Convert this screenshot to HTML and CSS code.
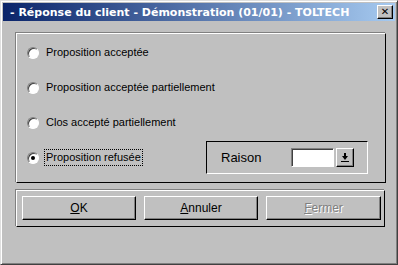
FILE: index.html
```html
<html lang="fr">
    <head>
        <meta charset="utf-8" />
        <title>Réponse du client</title>
        <link rel="stylesheet" href="styles.css">
    </head>
    <body>
        <div class="window">
            <div class="titlebar">
                <span class="title">- Réponse du client - Démonstration (01/01) - TOLTECH</span>
                <span class="close">&#x2715;</span>
            </div>
            <div class="group choices">
                <div class="row">
                    <span class="radio"></span>
                    <span class="label">Proposition acceptée</span>
                </div>
                <div class="row">
                    <span class="radio"></span>
                    <span class="label">Proposition acceptée partiellement</span>
                </div>
                <div class="row">
                    <span class="radio"></span>
                    <span class="label">Clos accepté partiellement</span>
                </div>
                <div class="row">
                    <span class="radio checked"></span>
                    <span class="label focus">Proposition refusée</span>
                    <div class="reason">
                        <span class="reason-label">Raison</span>
                        <span class="field"></span>
                        <span class="drop">
                            <svg width="8" height="9" viewBox="0 0 8 9">
                                <path d="M3 0h2v3h2l-3 4-3-4h2z" fill="#000"/>
                                <rect x="0" y="8" width="8" height="1" fill="#000"/>
                            </svg>
                        </span>
                    </div>
                </div>
            </div>
            <div class="group actions">
                <button class="btn"><u>O</u>K</button>
                <button class="btn"><u>A</u>nnuler</button>
                <button class="btn disabled"><u>F</u>ermer</button>
            </div>
        </div>
    </body>
</html>
```

FILE: styles.css
```css
body{
    margin: 0;
    background: #c0c0c0;
    font-family: "Liberation Sans", Arial, sans-serif;
    font-size: 11px;
    color: #000;
}
.window{
    width: 398px;
    height: 265px;
    box-sizing: border-box;
    background: #c0c0c0;
    border: 1px solid;
    border-color: #dfdfdf #404040 #404040 #dfdfdf;
    box-shadow: inset 1px 1px #fff, inset -1px -1px #808080;
    padding: 2px;
}
.titlebar{
    height: 18px;
    background: linear-gradient(to right, #0a246a, #a6caf0);
    display: flex;
    align-items: center;
    justify-content: space-between;
    padding: 0 2px 0 7px;
}
.title{
    color: #fff;
    font-family: "DejaVu Sans", Verdana, sans-serif;
    font-weight: bold;
    font-size: 11px;
}
.close{
    width: 16px;
    height: 14px;
    box-sizing: border-box;
    background: #c0c0c0;
    border: 1px solid;
    border-color: #fff #000 #000 #fff;
    box-shadow: inset -1px -1px #808080;
    font-size: 10px;
    font-weight: bold;
    line-height: 12px;
    text-align: center;
    font-family: "DejaVu Sans", sans-serif;
}
.group{
    border: 1px solid;
    border-color: #fff #000 #000 #fff;
    box-shadow: -1px -1px #808080;
}
.choices{
    margin: 12px 9px 0 13px;
    height: 147px;
    padding: 1px 0 0 10px;
    display: flex;
    flex-direction: column;
}
.row{
    height: 35px;
    display: flex;
    align-items: center;
}
.radio{
    width: 12px;
    height: 12px;
    box-sizing: border-box;
    border-radius: 50%;
    background: #fff;
    border: 1px solid;
    border-color: #808080 #fff #fff #808080;
    box-shadow: inset 1px 1px #404040;
    display: flex;
    align-items: center;
    justify-content: center;
    margin-right: 6px;
}
.radio.checked::after{
    content: "";
    width: 4px;
    height: 4px;
    border-radius: 50%;
    background: #000;
}
.label{
    padding: 1px 1px 2px 1px;
    font-size: 11px;
}
.focus{
    outline: 1px dotted #000;
}
.reason{
    margin-left: auto;
    margin-right: 17px;
    width: 162px;
    height: 33px;
    box-sizing: border-box;
    border: 1px solid;
    border-color: #000 #fff #fff #000;
    display: flex;
    align-items: center;
    padding-left: 14px;
}
.reason-label{
    font-size: 13px;
    width: 70px;
}
.field{
    width: 43px;
    height: 19px;
    box-sizing: border-box;
    background: #fff;
    border: 1px solid;
    border-color: #808080 #fff #fff #808080;
    box-shadow: inset 1px 1px #404040;
}
.drop{
    width: 18px;
    height: 19px;
    box-sizing: border-box;
    margin-left: 2px;
    border: 1px solid;
    border-color: #fff #000 #000 #fff;
    box-shadow: inset -1px -1px #808080;
    display: flex;
    align-items: center;
    justify-content: center;
}
.actions{
    margin: 7px 10px 0 13px;
    height: 37px;
    padding: 5px 4px 0 5px;
    box-sizing: border-box;
    display: grid;
    grid-template-columns: 114px 114px 115px;
    column-gap: 8px;
    align-items: start;
}
.btn{
    height: 24px;
    background: #c0c0c0;
    border: 1px solid;
    border-color: #fff #000 #000 #fff;
    box-shadow: inset -1px -1px #808080;
    font-family: "Liberation Sans", Arial, sans-serif;
    font-size: 12px;
    padding: 0;
    color: #000;
}
.btn.disabled{
    color: #808080;
    text-shadow: 1px 1px #fff;
}
```
